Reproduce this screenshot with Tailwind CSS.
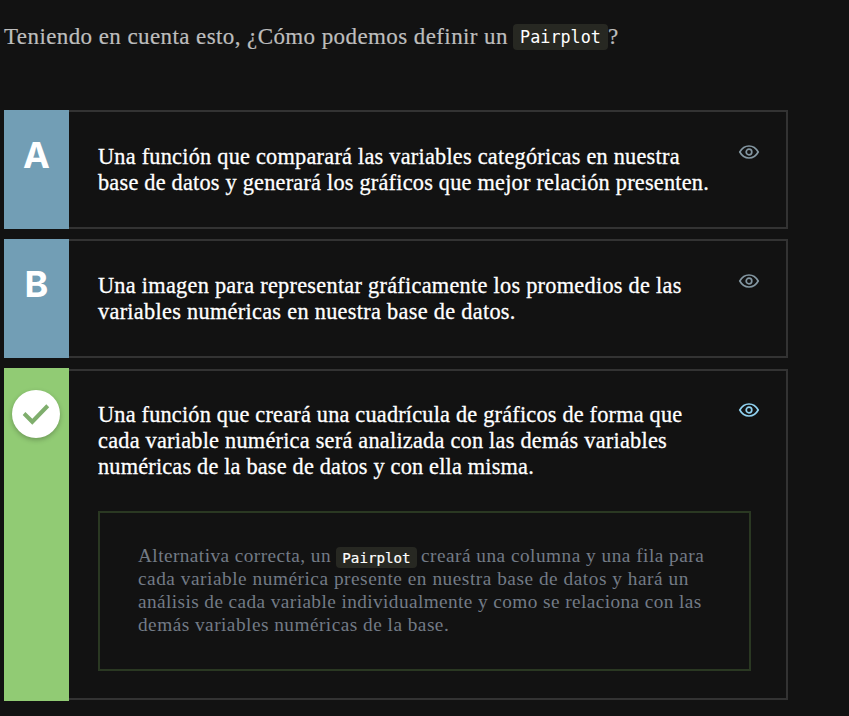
<!DOCTYPE html>
<html lang="es">
<head>
<meta charset="utf-8">
<title>Pairplot</title>
<script src="https://cdn.jsdelivr.net/npm/@tailwindcss/browser@4"></script>
</head>
<body class="h-[716px] overflow-hidden bg-[#121212] pl-1 font-['Source_Serif_Pro','Liberation_Serif',serif] text-white">
<main class="w-[784px]">
  <h1 class="flex h-[110px] items-start pt-6 text-[23px] leading-[26px] font-normal whitespace-nowrap text-[#bdbdbd] [-webkit-text-stroke:0.2px]">
    <span class="w-[509px] tracking-[0.41px]">Teniendo en cuenta esto, ¿Cómo podemos definir un</span>
    <code class="mr-px h-[26px] w-[95px] rounded bg-[#272822] text-center font-['DejaVu_Sans_Mono',monospace] text-[16.8px] text-white [-webkit-text-stroke:0]">Pairplot</code>
    <span class="-ml-px">?</span>
  </h1>
  <ol class="flex flex-col gap-[10px]">
    <li class="flex h-[119px]">
      <div class="w-[65px] bg-[#729eb5] pt-[23px] text-center font-['Inter',sans-serif] text-[36px] leading-[44px] font-bold">A</div>
      <div class="flex flex-1 justify-between border-2 border-l-0 border-[#333] pt-8 pr-[26px] pl-[29px]">
        <p class="text-[22.3px] leading-[26px] whitespace-nowrap [-webkit-text-stroke:0.3px]"><span class="tracking-[0.237px]">Una función que comparará las variables categóricas en nuestra</span><br><span class="tracking-[0.221px]">base de datos y generará los gráficos que mejor relación presenten.</span></p>
        <svg class="-mt-[3px] size-[22px] text-[#8396a1]" viewBox="0 0 22 22" fill="none" stroke="currentColor" stroke-width="1.7"><path d="M1.8 11C6.2 3 15.8 3 20.2 11C15.8 19 6.2 19 1.8 11Z"/><circle cx="11" cy="11" r="2.8"/></svg>
      </div>
    </li>
    <li class="flex h-[119px]">
      <div class="w-[65px] bg-[#729eb5] pt-[23px] text-center font-['Inter',sans-serif] text-[36px] leading-[44px] font-bold">B</div>
      <div class="flex flex-1 justify-between border-2 border-l-0 border-[#333] pt-8 pr-[26px] pl-[29px]">
        <p class="text-[22.3px] leading-[26px] whitespace-nowrap [-webkit-text-stroke:0.3px]"><span class="tracking-[0.271px]">Una imagen para representar gráficamente los promedios de las</span><br><span class="tracking-[0.298px]">variables numéricas en nuestra base de datos.</span></p>
        <svg class="-mt-[3px] size-[22px] text-[#8396a1]" viewBox="0 0 22 22" fill="none" stroke="currentColor" stroke-width="1.7"><path d="M1.8 11C6.2 3 15.8 3 20.2 11C15.8 19 6.2 19 1.8 11Z"/><circle cx="11" cy="11" r="2.8"/></svg>
      </div>
    </li>
    <li class="flex h-[333px]">
      <div class="w-[65px] bg-[#91cb74] pt-[22px] pl-2">
        <div class="size-12 rounded-full bg-white shadow-[0_2px_5px_rgba(0,0,0,.25)]">
          <svg class="size-12" viewBox="0 0 48 48" fill="#7fae6d"><path d="M10.7 25L13.4 22L20.3 28.8L34.3 14.3L37.2 17.3L20.3 34.7Z"/></svg>
        </div>
      </div>
      <div class="my-px flex-1 border-2 border-l-0 border-[#333] pt-[31px] pr-[26px] pl-[29px]">
        <div class="flex justify-between">
          <p class="text-[22.3px] leading-[26px] whitespace-nowrap [-webkit-text-stroke:0.3px]"><span class="tracking-[0.2px]">Una función que creará una cuadrícula de gráficos de forma que</span><br><span class="tracking-[0.234px]">cada variable numérica será analizada con las demás variables</span><br><span class="tracking-[0.185px]">numéricas de la base de datos y con ella misma.</span></p>
          <svg class="-mt-[3px] size-[22px] text-[#8fd0ee]" viewBox="0 0 22 22" fill="none" stroke="currentColor" stroke-width="1.7"><path d="M1.8 11C6.2 3 15.8 3 20.2 11C15.8 19 6.2 19 1.8 11Z"/><circle cx="11" cy="11" r="2.8"/></svg>
        </div>
        <div class="mt-[31px] h-[160px] w-[653px] border-2 border-[#2a3822] pt-[31px] pl-[38px] text-[19.3px] leading-[23px] whitespace-nowrap text-[#737b86]">
          <p class="flex h-[23px]"><span class="w-[198px] tracking-[0.435px]">Alternativa correcta, un</span><code class="mt-[3px] mr-[5px] h-[21px] w-[81px] rounded bg-[#272822] text-center font-['DejaVu_Sans_Mono',monospace] text-[14.2px] leading-[22px] text-white [-webkit-text-stroke:0.2px]">Pairplot</code><span class="-ml-px tracking-[0.49px]">creará una columna y una fila para</span></p>
          <p><span class="tracking-[0.535px]">cada variable numérica presente en nuestra base de datos y hará un</span><br><span class="tracking-[0.41px]">análisis de cada variable individualmente y como se relaciona con las</span><br><span class="tracking-[0.482px]">demás variables numéricas de la base.</span></p>
        </div>
      </div>
    </li>
  </ol>
</main>
</body>
</html>
